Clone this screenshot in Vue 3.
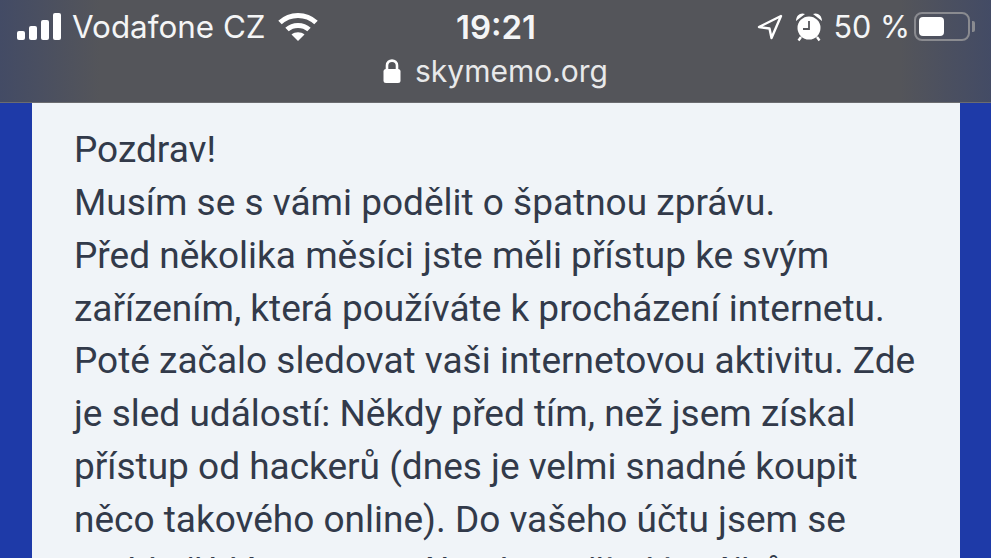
<script setup>
const lines = [
  'Pozdrav!',
  'Musím se s vámi podělit o špatnou zprávu.',
  'Před několika měsíci jste měli přístup ke svým',
  'zařízením, která používáte k procházení internetu.',
  'Poté začalo sledovat vaši internetovou aktivitu. Zde',
  'je sled událostí: Někdy před tím, než jsem získal',
  'přístup od hackerů (dnes je velmi snadné koupit',
  'něco takového online). Do vašeho účtu jsem se',
  'mohl přihlásit pomocí hesla z několika účtů.',
]
</script>

<template>
  <div class="page">
    <header class="bar">
      <div class="status">
        <div class="left">
          <svg class="signal" width="44" height="28" viewBox="0 0 44 28" fill="#fff">
            <rect x="0" y="18" width="8" height="9" rx="2" />
            <rect x="12" y="13" width="8" height="14" rx="2" />
            <rect x="24" y="7" width="8" height="20" rx="2" />
            <rect x="36" y="0" width="8" height="27" rx="2" />
          </svg>
          <span class="carrier">Vodafone CZ</span>
          <svg class="wifi" width="40" height="30" viewBox="0 0 40 30" fill="none" stroke="#fff" stroke-width="5">
            <path d="M2 10.5 C12 1 28 1 38 10.5" />
            <path d="M9 17.5 C15 12 25 12 31 17.5" />
            <path d="M20 29 L13.5 22.5 C17 19.5 23 19.5 26.5 22.5 Z" fill="#fff" stroke="none" />
          </svg>
        </div>
        <div class="time">19:21</div>
        <div class="right">
          <svg class="loc" width="26" height="26" viewBox="0 0 26 26" fill="none" stroke="#fff" stroke-width="2.4" stroke-linejoin="round">
            <path d="M24 2 L2 13 L12.5 14.5 L14.5 24 Z" />
          </svg>
          <svg class="alarm" width="28" height="30" viewBox="0 0 28 30">
            <path d="M1 9 C1 3 6 0 10 2 Z M27 9 C27 3 22 0 18 2 Z" fill="#fff" />
            <circle cx="14" cy="16" r="11.5" fill="#fff" />
            <path d="M14 9 V17 H8" fill="none" stroke="#55565a" stroke-width="1.8" />
            <path d="M6 25 L3.5 28.5 M22 25 L24.5 28.5" stroke="#fff" stroke-width="2.4" />
          </svg>
          <span class="pct">50 %</span>
          <div class="battery">
            <div class="level"></div>
            <div class="cap"></div>
          </div>
        </div>
      </div>
      <div class="url">
        <svg width="18" height="26" viewBox="0 0 18 26">
          <path d="M4 12 V7.5 C4 1 14 1 14 7.5 V12" fill="none" stroke="#fff" stroke-width="2.6" />
          <rect x="0.5" y="11" width="17" height="14" rx="2.5" fill="#fff" />
        </svg>
        <span>skymemo.org</span>
      </div>
    </header>
    <main class="body">
      <article class="card">
        <div v-for="line in lines" :key="line" class="line">{{ line }}</div>
      </article>
    </main>
  </div>
</template>

<style>
html, body { margin: 0; overflow: hidden; }
</style>

<style scoped>
.page {
  width: 991px;
  height: 558px;
  overflow: hidden;
  font-family: Roboto, "Liberation Sans", sans-serif;
}
.bar {
  height: 103px;
  box-sizing: border-box;
  background: linear-gradient(90deg, #434b65 0, #54555a 100px, #54555a 900px, #434b65 100%);
  border-bottom: 1px solid #6b6c70;
  color: #f4f5f6;
  font-family: Inter, Roboto, sans-serif;
}
.status {
  height: 53px;
  padding: 0 16px 0 17px;
  display: grid;
  grid-template-columns: 1fr auto 1fr;
  align-items: center;
}
.left, .right { display: flex; align-items: center; }
.right { justify-content: flex-end; }
.carrier { font-size: 31.4px; margin-left: 11px; font-weight: 400; }
.wifi { margin-left: 12px; }
.time { font-size: 33px; font-weight: 600; }
.loc { margin-right: 12px; }
.alarm { margin-right: 10px; }
.pct { font-size: 30.6px; margin-right: 4px; }
.battery {
  position: relative;
  width: 56px;
  height: 29px;
  box-sizing: border-box;
  border: 2px solid #8a8b90;
  border-radius: 8px;
  padding: 3px;
  margin-right: 5px;
}
.level { width: 25px; height: 100%; background: #fff; border-radius: 4px; }
.cap {
  position: absolute;
  right: -7px;
  top: 7px;
  width: 3px;
  height: 11px;
  background: #8a8b90;
  border-radius: 0 2px 2px 0;
}
.url {
  display: flex;
  justify-content: center;
  align-items: center;
  gap: 14px;
  font-size: 30px;
  color: #e8e9ea;
}
.body {
  height: 455px;
  padding: 0 31px 0 32px;
  background: #1e3aa8;
}
.card {
  height: 100%;
  background: #f0f4f8;
  padding: 21px 42px;
  color: #323a4a;
  font-size: 37px;
  line-height: 52.85px;
  white-space: nowrap;
}
</style>
